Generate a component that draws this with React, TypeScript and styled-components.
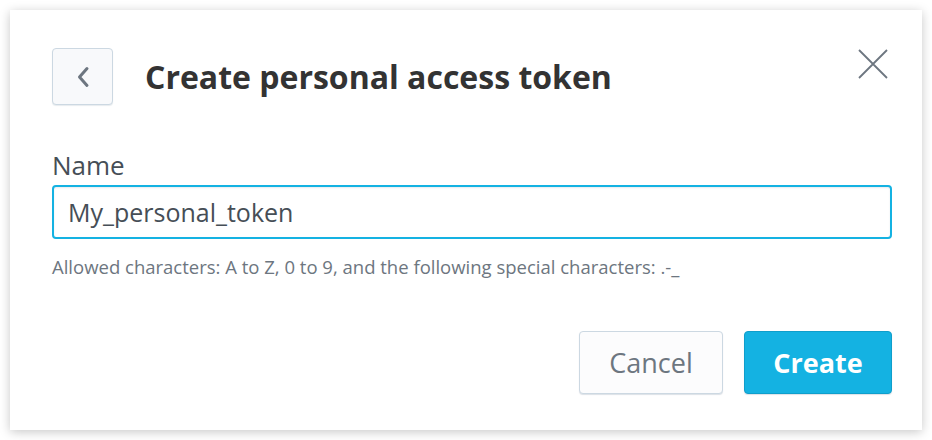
import React from "react";
import styled, { createGlobalStyle } from "styled-components";

const FONT = `"Open Sans", Lato, "Noto Sans", sans-serif`;

const Global = createGlobalStyle`
  html, body { margin: 0; padding: 0; background: #ffffff; }
  body { font-family: ${FONT}; }
  * { box-sizing: border-box; }
`;

const Page = styled.div`
  padding: 10px;
  width: 932px;
  height: 440px;
`;

const Dialog = styled.div`
  position: relative;
  width: 912px;
  height: 420px;
  background: #ffffff;
  box-shadow: 0 2px 10px rgba(0, 0, 0, 0.22);
  padding: 38px 30px 36px 42px;
  display: flex;
  flex-direction: column;
`;

const Header = styled.div`
  display: flex;
  align-items: center;
  gap: 32px;
  height: 57px;
`;

const BackButton = styled.button`
  width: 61px;
  height: 57px;
  border: 1px solid #ccd8e2;
  border-radius: 4px;
  background: #f8f9fb;
  box-shadow: 0 1px 1px rgba(20, 56, 93, 0.1);
  display: flex;
  align-items: center;
  justify-content: center;
  padding: 0;
  cursor: pointer;
`;

const Title = styled.h1`
  margin: 0;
  font-size: 32px;
  line-height: 40px;
  font-weight: 700;
  color: #333333;
`;

const CloseButton = styled.button`
  position: absolute;
  top: 38px;
  right: 33px;
  width: 32px;
  height: 32px;
  border: none;
  background: transparent;
  padding: 0;
  cursor: pointer;
  display: flex;
  align-items: center;
  justify-content: center;
`;

const Label = styled.label`
  display: block;
  margin-top: 45px;
  font-size: 26px;
  line-height: 30px;
  color: #464e56;
`;

const Input = styled.input`
  margin-top: 5px;
  width: 100%;
  height: 54px;
  border: 2px solid #14b2e2;
  border-radius: 4px;
  padding: 0 14px;
  font-family: ${FONT};
  font-size: 25px;
  color: #464e56;
  outline: none;
  box-shadow: inset 0 1px 2px rgba(31, 53, 74, 0.1);
`;

const Help = styled.p`
  margin: 15px 0 0;
  font-size: 18.5px;
  line-height: 26px;
  color: #6d7680;
`;

const Footer = styled.div`
  margin-top: auto;
  display: flex;
  justify-content: flex-end;
  gap: 21px;
`;

const Button = styled.button<{ $primary?: boolean }>`
  width: ${(p) => (p.$primary ? "148px" : "144px")};
  height: 63px;
  padding: 0;
  border-radius: 4px;
  font-family: ${FONT};
  font-size: 27px;
  font-weight: ${(p) => (p.$primary ? 700 : 400)};
  cursor: pointer;
  border: 1px solid ${(p) => (p.$primary ? "#0f9ecb" : "#ccd8e2")};
  background: ${(p) => (p.$primary ? "#14b2e2" : "#fcfcfd")};
  color: ${(p) => (p.$primary ? "#ffffff" : "#6d7680")};
  box-shadow: 0 1px 1px rgba(20, 56, 93, 0.15);
`;

export default function App() {
  return (
    <>
      <Global />
      <Page>
        <Dialog>
          <Header>
            <BackButton aria-label="Back">
              <svg width="14" height="22" viewBox="0 0 14 22">
                <path
                  d="M11 2.5 L3.5 11 L11 19.5"
                  fill="none"
                  stroke="#6d7680"
                  strokeWidth="3"
                  strokeLinecap="round"
                  strokeLinejoin="round"
                />
              </svg>
            </BackButton>
            <Title>Create personal access token</Title>
          </Header>
          <CloseButton aria-label="Close">
            <svg width="30" height="30" viewBox="0 0 30 30">
              <path
                d="M1 1 L29 29 M29 1 L1 29"
                fill="none"
                stroke="#6d7680"
                strokeWidth="1.8"
              />
            </svg>
          </CloseButton>
          <Label htmlFor="name">Name</Label>
          <Input id="name" defaultValue="My_personal_token" />
          <Help>
            Allowed characters: A to Z, 0 to 9, and the following special characters: .-_
          </Help>
          <Footer>
            <Button>Cancel</Button>
            <Button $primary>Create</Button>
          </Footer>
        </Dialog>
      </Page>
    </>
  );
}
